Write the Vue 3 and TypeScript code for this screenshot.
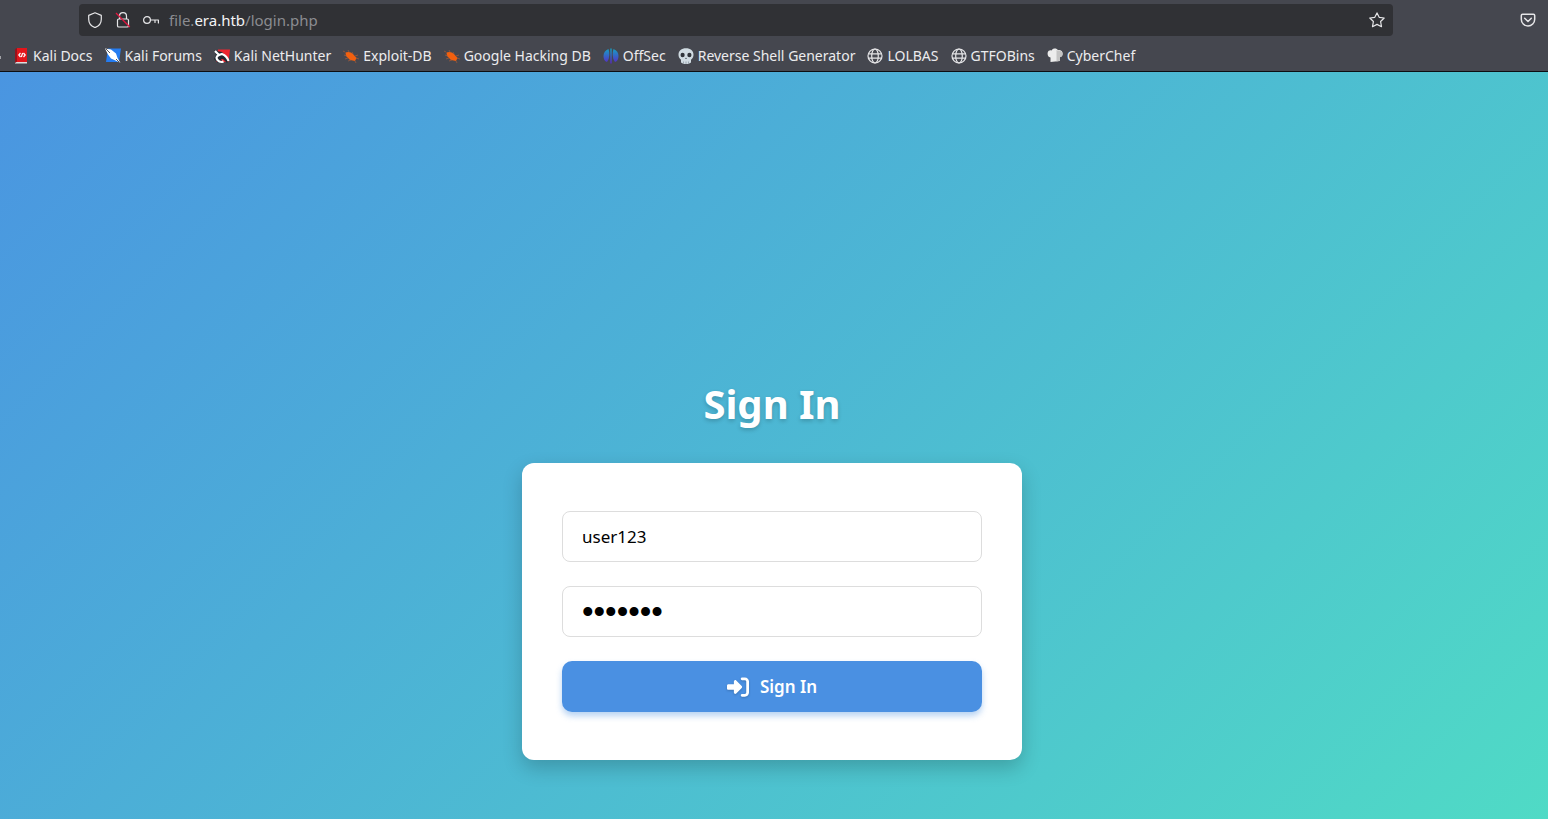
<script setup lang="ts">
import { ref } from 'vue'

interface Bookmark {
  icon: string
  label: string
}

const bookmarks: Bookmark[] = [
  { icon: 'docs', label: 'Kali Docs' },
  { icon: 'forums', label: 'Kali Forums' },
  { icon: 'hunter', label: 'Kali NetHunter' },
  { icon: 'bug', label: 'Exploit-DB' },
  { icon: 'bug', label: 'Google Hacking DB' },
  { icon: 'offsec', label: 'OffSec' },
  { icon: 'skull', label: 'Reverse Shell Generator' },
  { icon: 'globe', label: 'LOLBAS' },
  { icon: 'globe', label: 'GTFOBins' },
  { icon: 'chef', label: 'CyberChef' },
]

const username = ref('user123')
const password = ref('secret1')
</script>

<template>
  <div class="browser">
    <header class="chrome">
      <div class="toolbar">
        <div class="urlbar">
          <button class="tool" type="button" aria-label="Tracking protection">
            <svg viewBox="0 0 16 16"><path d="M8 .8 14.3 3.4V7.2C14.3 11 12 14 8 15.6 4 14 1.7 11 1.7 7.2V3.4Z" class="line" /></svg>
          </button>
          <button class="tool" type="button" aria-label="Connection not secure">
            <svg viewBox="0 0 16 16">
              <path d="M4.5 7V4.2a3.5 3.5 0 0 1 7 0V7M3.8 7h8.4q1.3 0 1.3 1.3v5.4q0 1.3-1.3 1.3H3.8q-1.3 0-1.3-1.3V8.3Q2.5 7 3.8 7Z" class="line" />
              <path d="M1 1 14.8 15" class="slash" />
            </svg>
          </button>
          <button class="tool" type="button" aria-label="Saved login">
            <svg viewBox="0 0 16 16"><circle cx="4" cy="8" r="3.4" class="line" /><path d="M7.4 8h8v3M12 8v2.5" class="line" /></svg>
          </button>
          <div class="address"><span>file.</span><b>era.htb</b><span>/login.php</span></div>
          <button class="tool" type="button" aria-label="Bookmark this page">
            <svg viewBox="0 0 16 16"><path d="M8 .9 10.2 5.3 15.2 6 11.6 9.5 12.5 14.7 8 12.4 3.5 14.7 4.4 9.5.8 6 5.8 5.3Z" class="line" /></svg>
          </button>
        </div>
        <button class="tool" type="button" aria-label="Save to Pocket">
          <svg viewBox="0 0 16 16"><path d="M2.5 2.3h11q1.2 0 1.2 1.2V7.3a6.7 6.7 0 0 1-13.4 0V3.5q0-1.2 1.2-1.2Z" class="line thick" /><path d="m4.7 6.3 3.3 3.2 3.3-3.2" class="line thick" /></svg>
        </button>
      </div>
      <nav class="bookmarks">
        <span class="edge"></span>
        <a v-for="b in bookmarks" :key="b.label" class="bookmark" href="#">
          <svg v-if="b.icon === 'docs'" viewBox="0 0 16 16">
            <path d="M4 0h10v14H4Z" fill="#e3151b" /><path d="M2 1.2 4 0v14l-2 1Z" fill="#97131c" /><path d="M2 15l1.500-1H14v1.600H2Z" fill="#ddd" />
            <path d="M7.500 5 5.800 7l1.700 2M10.500 5l1.700 2-1.700 2M9.600 5 8.400 9" stroke="#fff" fill="none" stroke-width="1.2" />
          </svg>
          <svg v-else-if="b.icon === 'forums'" viewBox="0 0 16 16">
            <path d="M3 .5h13L14 14H1Z" fill="#257cf0" /><path d="M0 .5 6 1.500l5 4 1.500 4.500 3 5-5-2.500-4.500-2-3-4Z" fill="#fff" /><path d="m1 1 4 4m6 6 3.500 3.500" stroke="#292d36" fill="none" stroke-width=".8" />
          </svg>
          <svg v-else-if="b.icon === 'hunter'" viewBox="0 0 16 16">
            <path d="M4 1.500h12L14.500 14H2Z" fill="#ed2630" /><path d="M0 2.500 8 4l7 8-2 3-4-4-2 0 2 4H4L0 11l2-4Z" fill="#222831" /><path d="m1 3 4 4 3-1q5 2 6.500 7M5 7Q1 9 3.500 12t6 1.500" stroke="#fff" fill="none" stroke-width="2.2" />
          </svg>
          <svg v-else-if="b.icon === 'bug'" viewBox="0 0 16 16">
            <path d="M2.500 4.500Q7 3.200 10 6l3.500 4-1.500 3-5-1-4-4Z" fill="#f2600f" /><path d="M2 4 0 3m6 1-1-2m5 4-1-2m3 4 3-1m-2 3 3 1M4 8 1 7m4 3-3 1m6 1-3 1m7 0 1 2" stroke="#a85a38" fill="none" stroke-width=".7" />
          </svg>
          <svg v-else-if="b.icon === 'offsec'" viewBox="0 0 16 16">
            <defs><linearGradient id="offsec-fill" x1="0" y1="0" x2="0" y2="16" gradientUnits="userSpaceOnUse"><stop offset="0" stop-color="#12a5c4" /><stop offset="1" stop-color="#5b24c7" /></linearGradient></defs>
            <path d="M5.500 1Q.5 3 .5 8t3.500 6Q6.300 11 6.300 7T5.500 1Zm5 0Q15.500 3 15.500 8T12 14Q9.700 11 9.700 7t.8-6ZM7.300 .5h1.400v15H7.300Z" fill="url(#offsec-fill)" />
          </svg>
          <svg v-else-if="b.icon === 'skull'" viewBox="0 0 16 16">
            <path d="M8 .3c4.500 0 7.500 2.600 7.500 6.500 0 2-.8 3-1.500 4l-1 1v2.700q-2.500 2-5 1.200-2.500.8-5-1.200v-2.700l-1-1c-.7-1-1.500-2-1.500-4C.5 2.900 3.500.3 8 .3Z" fill="#d0dbe2" />
            <ellipse cx="4.600" cy="7" rx="2.100" ry="2.200" fill="#30343b" /><ellipse cx="11.400" cy="7" rx="2.100" ry="2.200" fill="#30343b" />
            <path d="m8 9.500 1 1.500H7Z" fill="#4b555f" /><path d="M5.500 13.500v2M8 13.500v2m2.500-2v2" stroke="#85919c" stroke-width=".7" />
          </svg>
          <svg v-else-if="b.icon === 'globe'" viewBox="0 0 16 16">
            <circle cx="8" cy="8" r="7" class="line" /><ellipse cx="8" cy="8" rx="3.3" ry="7" class="line" /><path d="M1.500 5.800h13M1.500 10.200h13" class="line" />
          </svg>
          <svg v-else viewBox="0 0 16 16">
            <path d="M3.500 14V9.500C1 9 .3 7 .7 4.500c.6-2 2.300-2.700 4-2 1-2.400 5-2.600 6.300-.3 2-.6 4 .3 4.500 2.300.5 2.300-.5 4-2.500 4.500V13Z" fill="#ececec" /><path d="M9.500 2v11.500l3.500-.7V9.300c2-.3 2.800-2 2.500-4C14.500 3 13 2.300 11 2.700Z" fill="#c4c4c4" />
          </svg>
          <span>{{ b.label }}</span>
        </a>
      </nav>
    </header>

    <main class="page">
      <h1>Sign In</h1>
      <form class="card" @submit.prevent>
        <input v-model="username" class="field" type="text" aria-label="Username" autocomplete="off">
        <input v-model="password" class="field secret" type="password" aria-label="Password" autocomplete="off">
        <button class="submit" type="submit">
          <svg viewBox="0 0 512 512"><path d="M352 96h64c17.700 0 32 14.300 32 32v256c0 17.700-14.300 32-32 32h-64c-17.700 0-32 14.300-32 32s14.300 32 32 32h64c53 0 96-43 96-96V128c0-53-43-96-96-96h-64c-17.700 0-32 14.300-32 32s14.300 32 32 32zm-9.400 182.600c12.500-12.500 12.500-32.800 0-45.300l-128-128c-9.200-9.200-22.900-11.900-34.900-6.900S160 115.100 160 128v64H32c-17.700 0-32 14.300-32 32v64c0 17.700 14.300 32 32 32h128v64c0 12.900 7.800 24.600 19.800 29.600s25.700 2.200 34.900-6.900l128-128z" /></svg>
          <span>Sign In</span>
        </button>
      </form>
    </main>
  </div>
</template>

<style>
body {
  margin: 0;
}
</style>

<style scoped>
.browser {
  display: flex;
  flex-direction: column;
  min-height: 100vh;
  font-family: "Noto Sans", sans-serif;
}
.chrome {
  background: #45474f;
  border-bottom: 1px solid #0d0e12;
}
.toolbar {
  display: flex;
  align-items: center;
  justify-content: space-between;
  height: 40px;
  padding: 0 12px 0 79px;
}
.urlbar {
  display: flex;
  align-items: center;
  flex: 1;
  gap: 12px;
  height: 32px;
  margin-right: 127px;
  padding: 0 8px;
  border-radius: 4px;
  background: #303135;
}
.tool {
  width: 16px;
  height: 16px;
  padding: 0;
  border: 0;
  background: none;
}
.tool svg {
  display: block;
}
.line {
  fill: none;
  stroke: #e6e6e8;
  stroke-width: 1.2;
  stroke-linejoin: round;
  stroke-linecap: round;
}
.thick {
  stroke-width: 1.5;
}
.slash {
  stroke: #e2163f;
  stroke-width: 1.3;
}
.address {
  flex: 1;
  margin-left: -2px;
  color: #8b8c91;
  font-size: 15px;
}
.address b {
  color: #f4f4f5;
  font-weight: 400;
}
.bookmarks {
  display: flex;
  align-items: center;
  gap: 12px;
  height: 31px;
}
.edge {
  width: 1px;
  height: 3px;
  margin-top: 4px;
  background: #a2a3a7;
}
.bookmark {
  display: flex;
  align-items: center;
  gap: 4px;
  color: #ececee;
  font-size: 14px;
  text-decoration: none;
  white-space: nowrap;
}
.bookmark svg {
  width: 16px;
  height: 16px;
}
.page {
  display: flex;
  flex: 1;
  flex-direction: column;
  align-items: center;
  justify-content: flex-end;
  padding: 0 4px 59px 0;
  background: #50e3c2 linear-gradient(135deg, #4a95e1, #50e3c2) 0 0 / 100% 138% no-repeat;
}
h1 {
  margin: 0 0 31px;
  color: #fff;
  font-size: 40px;
  font-weight: 700;
  line-height: 56px;
  text-shadow: 0 2px 4px rgba(0, 0, 0, 0.2);
}
.card {
  display: flex;
  flex-direction: column;
  gap: 24px;
  box-sizing: border-box;
  width: 100%;
  max-width: 500px;
  padding: 48px 40px;
  border-radius: 12px;
  background: #fff;
  box-shadow: 0 8px 20px rgba(0, 0, 0, 0.2);
}
.field {
  box-sizing: border-box;
  width: 100%;
  height: 51px;
  padding: 0 19px;
  border: 1px solid #ddd;
  border-radius: 8px;
  background: #fff;
  color: #000;
  font-family: inherit;
  font-size: 17px;
}
.secret {
  font-family: "Liberation Sans", sans-serif;
  font-size: 33px;
}
.submit {
  display: flex;
  align-items: center;
  justify-content: center;
  gap: 11px;
  height: 51px;
  padding: 0;
  border: 0;
  border-radius: 10px;
  background: #4a90e2;
  box-shadow: 0 4px 6px rgba(74, 144, 226, 0.4);
  color: #fff;
  font-family: inherit;
  font-size: 17px;
  font-weight: 600;
}
.submit svg {
  width: 22px;
  height: 22px;
  fill: #fff;
  filter: drop-shadow(0 1px 1px rgba(0, 0, 0, 0.2));
}
</style>
